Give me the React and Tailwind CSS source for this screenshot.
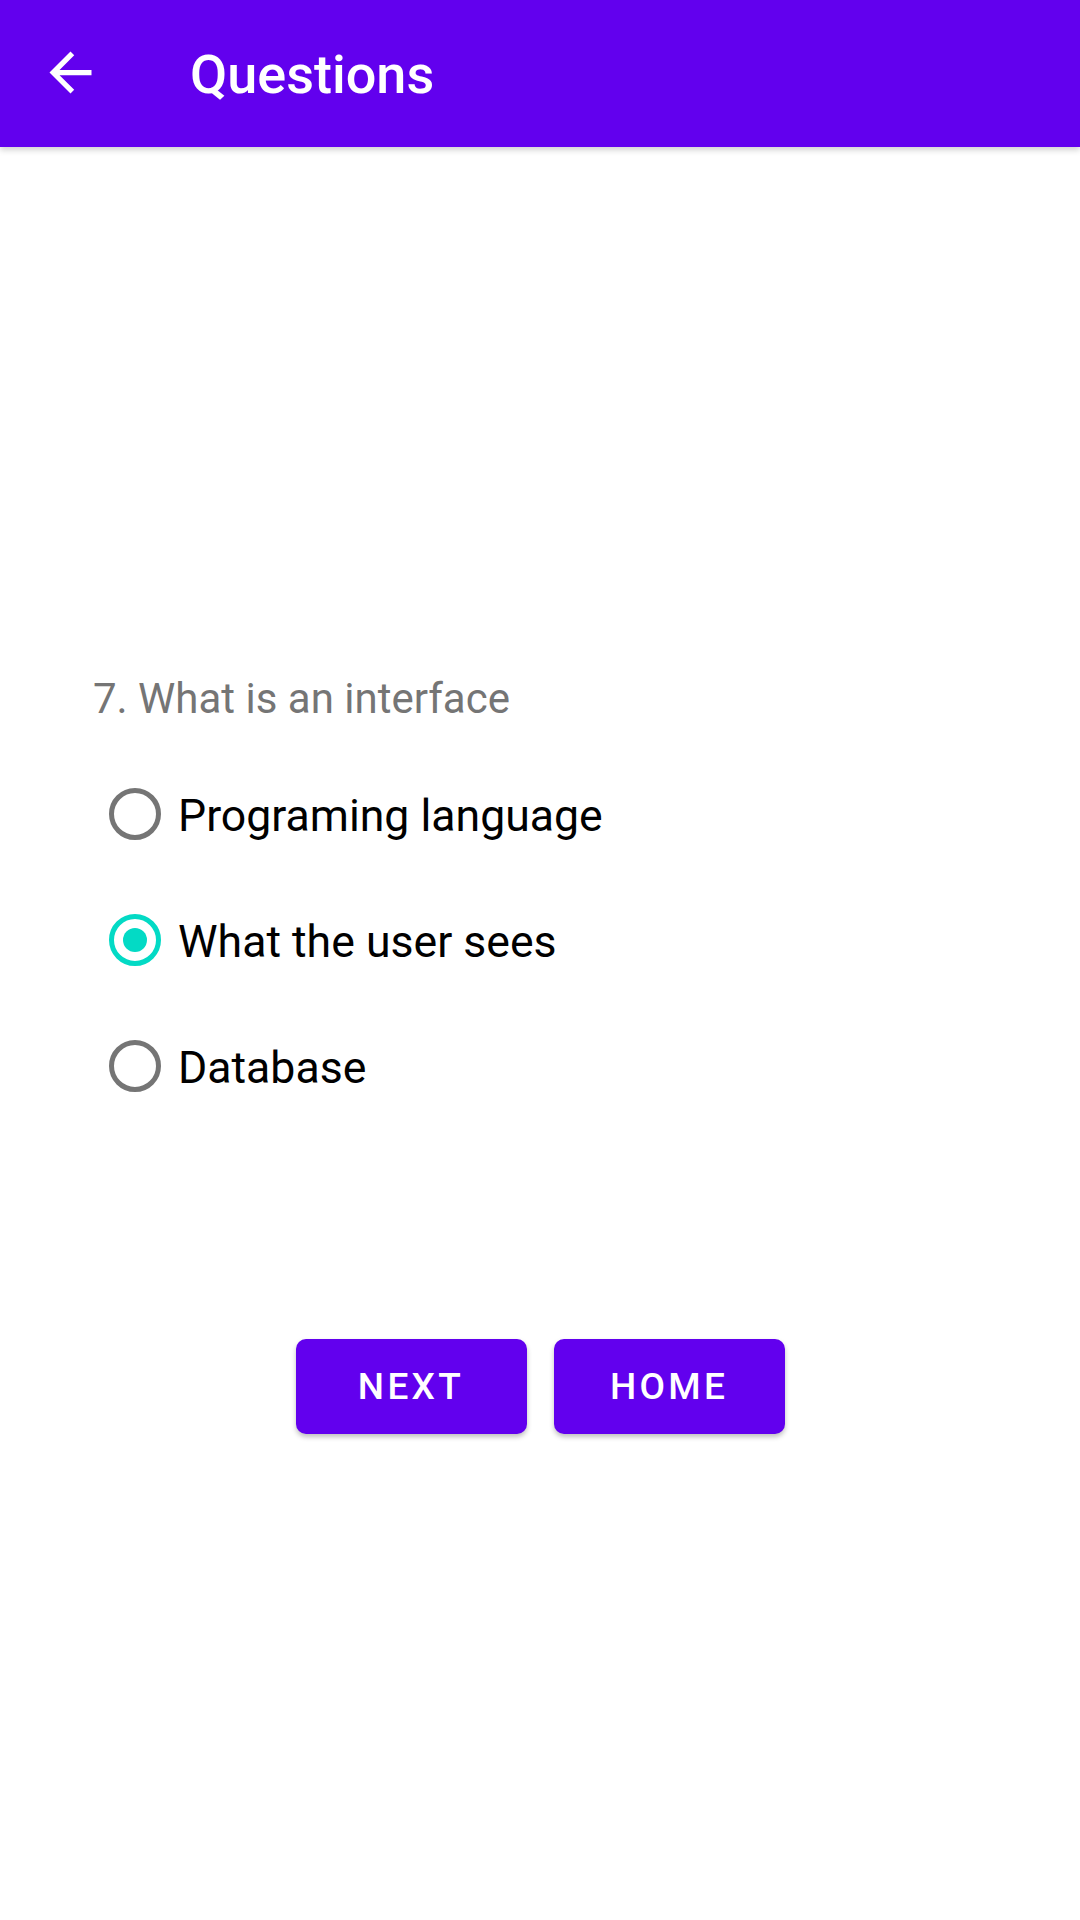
const options = ["Programing language", "What the user sees", "Database"];

const BackArrow = () => (
  <svg viewBox="0 0 24 24" className="h-[63px] w-[63px]" fill="#ffffff">
    <path d="M20 11H7.83l5.59-5.59L12 4l-8 8 8 8 1.41-1.41L7.83 13H20v-2z" />
  </svg>
);

const Radio = ({ checked }) => (
  <span
    className={`flex h-[52px] w-[52px] shrink-0 items-center justify-center rounded-full border-[5px] ${
      checked ? "border-[#03DAC5]" : "border-[#757575]"
    }`}
  >
    {checked && <span className="h-[24px] w-[24px] rounded-full bg-[#03DAC5]" />}
  </span>
);

export default function App() {
  const selected = 1;

  return (
    <div className="min-h-[1920px] w-[1080px] bg-white font-['Roboto',sans-serif]">
      {/* app bar */}
      <header className="relative z-10 flex h-[147px] items-center bg-[#6200EE] shadow-[0_3px_6px_rgba(0,0,0,0.18)]">
        <div className="ml-[39px] -mt-[2px]">
          <BackArrow />
        </div>
        <h1 className="ml-[88px] pt-[3px] text-[54px] font-medium leading-[64px] text-white">
          Questions
        </h1>
      </header>

      {/* question */}
      <div className="pl-[93px] pt-[527px]">
        <p className="text-[42px] leading-[49px] text-[#757575]">7. What is an interface</p>
      </div>

      <div className="mt-[28px] flex flex-col pl-[109px]">
        {options.map((opt, i) => (
          <label key={opt} className="flex h-[126px] items-center gap-[17px]">
            <Radio checked={i === selected} />
            <span className="pt-[4px] text-[44.6px] leading-[54px] text-black">{opt}</span>
          </label>
        ))}
      </div>

      {/* buttons */}
      <div className="mt-[210px] flex justify-center gap-[27px]">
        <button className="flex h-[95px] w-[231px] items-center justify-center rounded-[10px] bg-[#6200EE] text-[37px] font-medium tracking-[3.3px] text-white shadow-[0_3px_5px_rgba(0,0,0,0.25)]">
          NEXT
        </button>
        <button className="flex h-[95px] w-[231px] items-center justify-center rounded-[10px] bg-[#6200EE] text-[37px] font-medium tracking-[3.3px] text-white shadow-[0_3px_5px_rgba(0,0,0,0.25)]">
          HOME
        </button>
      </div>
    </div>
  );
}
